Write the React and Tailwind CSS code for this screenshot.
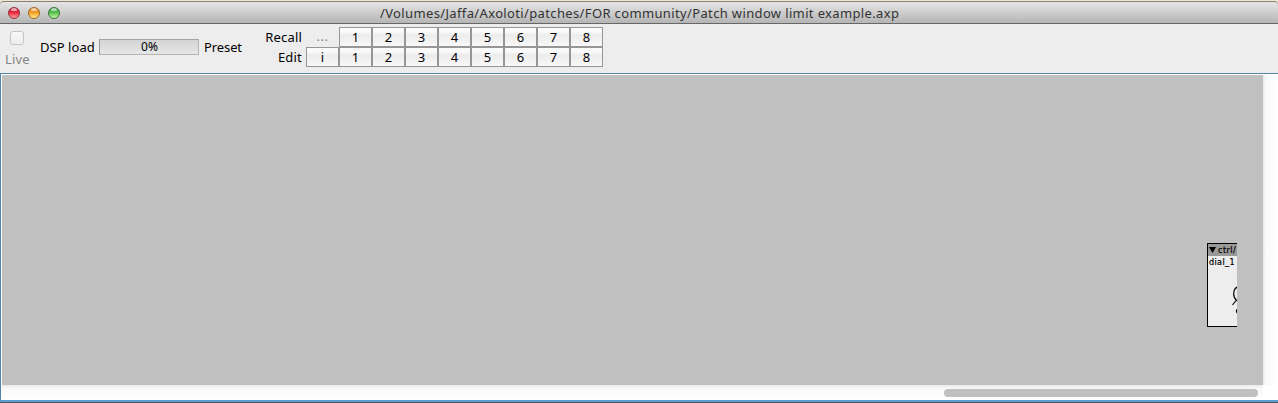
import React from "react";

const presets = ["1", "2", "3", "4", "5", "6", "7", "8"];

function Light({ className }) {
  return (
    <span className={`relative h-[12px] w-[12px] overflow-hidden rounded-full border ${className}`}>
      <span className="absolute left-[2px] top-0 h-[3px] w-[6px] rounded-full bg-white/60" />
    </span>
  );
}

function Key({ children }) {
  return (
    <div className="flex h-[20px] w-[33px] items-center justify-center border border-[#969696] bg-linear-to-b from-[#fafafa] from-20% via-[#ececec] via-40% to-[#f8f8f8]">
      <span>{children}</span>
    </div>
  );
}

function TitleBar() {
  return (
    <header className="flex h-[24px] shrink-0 items-center justify-center border-b border-[#676767] bg-[#ede6d8] pt-px">
      <div className="flex h-full w-full items-center justify-center rounded-t-[4px] border-t border-[#858070] bg-linear-to-b from-[#e6e6e6] to-[#b5b5b5]">
        <div className="flex w-[380px] gap-[8px] pl-[8px]">
          <Light className="border-[#983038] bg-linear-to-b from-[#c9152c] via-[#e72d43] to-[#ff9a9c]" />
          <Light className="border-[#a0651e] bg-linear-to-b from-[#d9780f] via-[#f5a42b] to-[#ffee88]" />
          <Light className="border-[#397435] bg-linear-to-b from-[#2f9437] via-[#5cc353] to-[#c6f9a8]" />
        </div>
        <div className="w-[898px] whitespace-pre text-[13px] leading-[20px] tracking-[0.36px] text-[#333]">
          /Volumes/Jaffa/Axoloti/patches/FOR community/Patch window limit example.axp
        </div>
      </div>
    </header>
  );
}

function Toolbar() {
  return (
    <div className="flex h-[49px] shrink-0 bg-[#ededed] text-[13px] leading-[18px]">
      <div className="w-[40px] pl-[5px] pt-[7px] text-[#858585]">
        <div className="ml-[5px] h-[14px] w-[14px] rounded-[3px] border border-[#c4c4c4] bg-linear-to-b from-[#f7f7f7] to-[#ededed]" />
        <div className="mt-[5px] tracking-[0.2px]">Live</div>
      </div>
      <div className="w-[59px] whitespace-nowrap pt-[14px] tracking-[0.05px]">DSP load</div>
      <div className="mt-[15px] flex h-[16px] w-[100px] items-center justify-center border border-[#b4b4b4] border-l-[#999] border-t-[#a4a4a4] bg-linear-to-b from-[#d4d4d4] to-[#e6e6e6] pl-px text-[12px]">
        0%
      </div>
      <div className="w-[60px] pl-[5px] pt-[14px] tracking-[-0.1px]">Preset</div>
      <div className="flex w-[43px] flex-col pt-[3px] text-right leading-[20px]">
        <span className="tracking-[0.2px]">Recall</span>
        <span className="tracking-[0.2px]">Edit</span>
      </div>
      <div className="ml-[4px] flex flex-col pt-[3px]">
        <div className="flex">
          <div className="h-[20px] w-[33px] text-center tracking-[0.5px] text-[#858585]">...</div>
          {presets.map((n) => <Key key={n}>{n}</Key>)}
        </div>
        <div className="flex">
          <Key>i</Key>
          {presets.map((n) => <Key key={n}>{n}</Key>)}
        </div>
      </div>
    </div>
  );
}

function DialNode() {
  return (
    <div className="absolute left-[1205px] top-[168px] h-[84px] w-[30px] overflow-hidden border-y border-l border-black bg-[#ededed] text-[9px] leading-[12px]">
      <div className="flex h-[12px] items-center whitespace-nowrap bg-[#999]">
        <svg className="mb-px ml-px mr-[2px] shrink-0" width="7" height="6" viewBox="0 0 7 6">
          <path d="M0 0H7L3.5 6Z" fill="#000" />
        </svg>
        <span className="pt-[2px] font-['DejaVu_Sans'] text-[8px] tracking-[0.5px] [-webkit-text-stroke:0.2px_black]">ctrl/</span>
      </div>
      <div className="whitespace-nowrap pl-px pt-px font-['DejaVu_Sans'] text-[8px] leading-[11px] tracking-[0.4px] [-webkit-text-stroke:0.2px_black]">dial_1</div>
      <svg className="absolute left-0 top-[38px]" width="29" height="38" viewBox="0 0 29 38">
        <path d="M29.500 5C27 6 25.700 9 25.700 12C25.700 15.500 27 17.500 29.500 19M28.500 18L24.500 23" fill="none" stroke="#000" strokeWidth="1.2" />
        <path d="M29.500 26C27.300 27.500 27.300 30.500 29.500 32Z" fill="#000" />
      </svg>
    </div>
  );
}

export default function App() {
  return (
    <div className="flex h-[403px] w-[1278px] flex-col overflow-hidden bg-white font-['Noto_Sans','Open_Sans',sans-serif] text-black">
      <TitleBar />
      <Toolbar />
      <main className="flex h-[329px] flex-col border-b-2 border-l border-t border-b-[#5b9dce] border-l-[#5584a9] border-t-[#4f82a3]">
        <div className="flex h-[311px] border-t border-white pl-px">
          <div className="relative w-[1261px] bg-[#c0c0c0]">
            <DialNode />
          </div>
          <div className="flex-1 bg-linear-to-r from-[#e9e9e9] via-[#fafafa] via-20% to-white" />
        </div>
        <div className="flex h-[15px] pl-px">
          <div className="w-[1261px] bg-linear-to-b from-[#e9e9e9] via-[#f8f8f8] via-20% to-white pl-[942px] pt-[4px]">
            <div className="h-[8px] w-[314px] rounded-full bg-[#c0c0c0]" />
          </div>
        </div>
      </main>
      <div className="h-px bg-[#505860]" />
    </div>
  );
}
